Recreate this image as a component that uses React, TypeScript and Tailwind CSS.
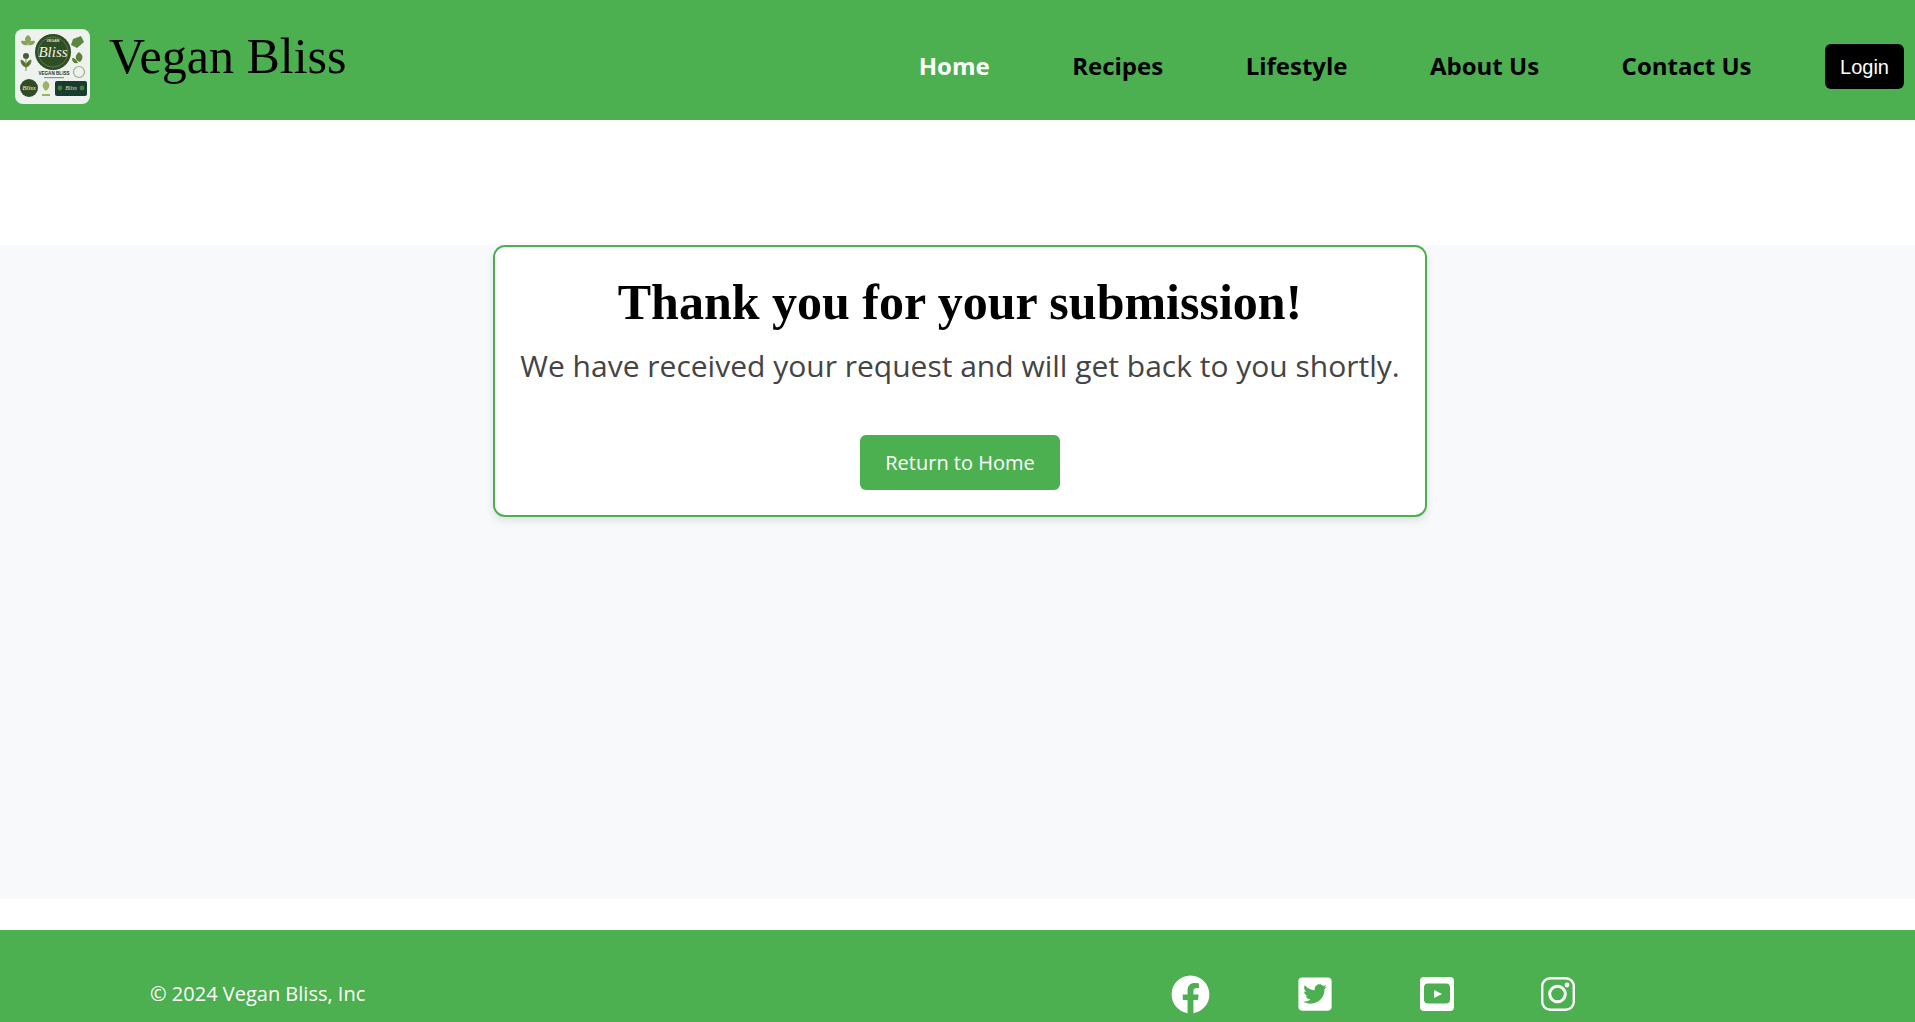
import React from "react";
import { FaFacebook, FaTwitterSquare } from "react-icons/fa";

function Logo() {
  return (
    <svg viewBox="0 0 75 75" className="w-[75px] h-[75px] rounded-lg shrink-0">
      <rect width="75" height="75" fill="#eef2ee" />
      <circle cx="38" cy="23" r="18" fill="#2f4d24" />
      <circle cx="38" cy="23" r="15" fill="none" stroke="#8aa86a" strokeWidth="0.5" />
      <text x="38" y="13" textAnchor="middle" fontFamily="Liberation Sans, sans-serif" fontWeight="700" fontSize="3.6" fill="#dfe6cf">
        VEGAN
      </text>
      <text x="38" y="28" textAnchor="middle" fontFamily="Liberation Serif, serif" fontStyle="italic" fontSize="15" fill="#f2f4ea">
        Bliss
      </text>
      <path d="M13 6c3 2 5 5 0 9-5-4-3-7 0-9zM6 12c3-1 6 0 7 4-4 1-7-1-7-4zM20 12c-3-1-6 0-7 4 4 1 7-1 7-4z" fill="#87a35c" />
      <circle cx="11" cy="27" r="3" fill="#4b5a33" />
      <path d="M11 28v14M11 38c-4-1-5-4-5-7 3 1 5 3 5 7zM11 38c4-1 5-4 5-7-3 1-5 3-5 7z" stroke="#55752f" strokeWidth="0.8" fill="#55752f" />
      <path d="M58 10l8-3 3 6-7 6-6-3z" fill="#5b8740" />
      <path d="M64 23c4 3 5 6 1 10-5-2-6-6-1-10zM57 29c3 0 5 2 6 5-4 1-6-1-6-5z" fill="#5c8038" />
      <circle cx="64" cy="43" r="5.5" fill="none" stroke="#9ab184" strokeWidth="1.2" />
      <text x="39" y="46" textAnchor="middle" fontFamily="Liberation Sans, sans-serif" fontWeight="700" fontSize="4.6" fill="#24351f">
        VEGAN BLISS
      </text>
      <rect x="29" y="48" width="20" height="1.2" fill="#8b9488" />
      <circle cx="14" cy="59" r="9" fill="#2f4d24" />
      <text x="14" y="61" textAnchor="middle" fontFamily="Liberation Serif, serif" fontStyle="italic" fontSize="7" fill="#eef2e8">
        Bliss
      </text>
      <path d="M31 52c4 2 5 6 0 10-5-4-4-8 0-10zM27 65h8v2h-8z" fill="#9db266" />
      <rect x="40" y="52" width="32" height="15" rx="2" fill="#173d30" />
      <text x="56" y="61" textAnchor="middle" fontFamily="Liberation Serif, serif" fontStyle="italic" fontSize="6" fill="#d9e4d4">
        Bliss
      </text>
      <circle cx="45" cy="59" r="2.4" fill="#4d7a3f" />
      <circle cx="67" cy="59" r="2.4" fill="#4d7a3f" />
    </svg>
  );
}

function YoutubeIcon() {
  return (
    <svg viewBox="0 0 34 34" className="w-[34px] h-[34px]">
      <path
        fillRule="evenodd"
        fill="#fff"
        d="M4 0h26a4 4 0 0 1 4 4v26a4 4 0 0 1-4 4H4a4 4 0 0 1-4-4V4a4 4 0 0 1 4-4zM8 6.500a4 4 0 0 0-4 4v12a4 4 0 0 0 4 4h18a4 4 0 0 0 4-4v-12a4 4 0 0 0-4-4zM14 13l8 4-8 4z"
      />
    </svg>
  );
}

function InstagramIcon() {
  return (
    <svg viewBox="0 0 34 34" className="w-[34px] h-[34px]" fill="none" stroke="#fff">
      <rect x="1.200" y="1.200" width="31.600" height="31.600" rx="8" strokeWidth="2.400" />
      <circle cx="16.500" cy="17" r="7.800" strokeWidth="3" />
      <circle cx="26" cy="8" r="2.400" fill="#fff" stroke="none" />
    </svg>
  );
}

const navItems = ["Recipes", "Lifestyle", "About Us", "Contact Us"];

export default function App() {
  return (
    <div className="h-[1022px] overflow-hidden bg-white font-['Open_Sans',sans-serif]">
      <header className="h-[120px] bg-[#4caf50] flex items-center justify-between pt-3 pl-[15px] pr-[11px]">
        <div className="flex items-start">
          <Logo />
          <div className="ml-[19px] text-[50px] leading-[55px] text-black font-['Liberation_Serif',serif]">
            Vegan Bliss
          </div>
        </div>
        <nav className="flex items-center gap-[82.5px] text-2xl font-bold text-black">
          <a className="text-white">Home</a>
          {navItems.map((item) => (
            <a key={item}>{item}</a>
          ))}
          <button className="ml-[-9px] mt-px h-[45px] w-[79px] rounded-md bg-black text-white text-xl font-normal font-['Liberation_Sans',sans-serif]">
            Login
          </button>
        </nav>
      </header>

      <main className="mt-[125px] h-[654px] bg-[#f8f9fa] flex justify-center items-start pl-[5px]">
        <div className="w-[934px] h-[272px] rounded-xl border-2 border-[#4caf50] bg-white shadow-[0_4px_8px_rgba(0,0,0,0.1)] flex flex-col items-center pt-[28px]">
          <h1 className="text-[50px] leading-[55px] font-bold text-black font-['Liberation_Serif',serif]">
            Thank you for your submission!
          </h1>
          <p className="mt-[15px] text-3xl leading-[41px] text-[#444444]">
            We have received your request and will get back to you shortly.
          </p>
          <button className="mt-[49px] w-[200px] h-[55px] rounded-md bg-[#4caf50] text-xl text-white">
            Return to Home
          </button>
        </div>
      </main>

      <footer className="mt-[31px] h-[92px] bg-[#4caf50] flex items-start pt-[44px] pl-[150px] text-white">
        <div className="text-xl leading-[40px]">© 2024 Vegan Bliss, Inc</div>
        <div className="ml-[806px] flex items-center h-[40px] text-white">
          <FaFacebook className="w-[39px] h-[39px]" />
          <FaTwitterSquare className="ml-[86px] w-[38px] h-[38px]" />
          <div className="ml-[86px]">
            <YoutubeIcon />
          </div>
          <div className="ml-[87px]">
            <InstagramIcon />
          </div>
        </div>
      </footer>
    </div>
  );
}
